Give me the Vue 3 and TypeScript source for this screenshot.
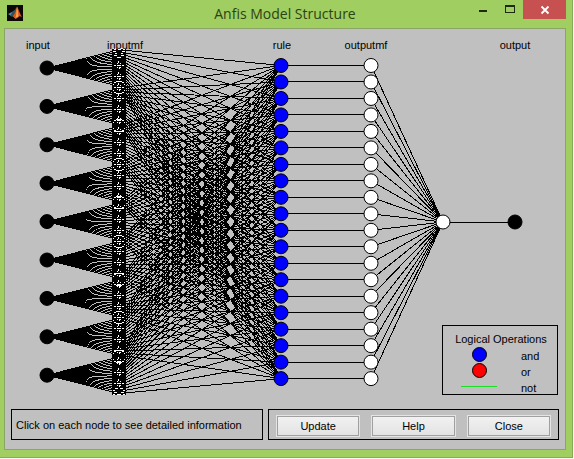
<script setup lang="ts">
import { ref } from 'vue'

interface Node {
  x: number
  y: number
  name: string
}

const INPUTS = 9
const RULES = 20
const INPUT_STEP = 38.4
const MF_STEP = INPUT_STEP / RULES
const RULE_STEP = 16.48

const column = (count: number, x: number, top: number, step: number, name: string): Node[] =>
  Array.from({ length: count }, (_, i) => ({ x, y: top + i * step, name: `${name} ${i + 1}` }))

const inputs = column(INPUTS, 42, 39, INPUT_STEP, 'Input')
const rules = column(RULES, 276, 36.5, RULE_STEP, 'Rule')
const outputMfs = column(RULES, 366, 36.5, RULE_STEP, 'Output MF')
const sum: Node = { x: 438, y: 193, name: 'Aggregated output' }
const output: Node = { x: 510, y: 193, name: 'Output' }

const MF_X = 114
const mfTop = inputs[0].y - MF_STEP * (RULES - 1) / 2
const mfY = (input: number, mf: number): number => mfTop + input * INPUT_STEP + mf * MF_STEP

const line = (x1: number, y1: number, x2: number, y2: number): string =>
  `M${x1} ${y1.toFixed(2)}L${x2} ${y2.toFixed(2)}`

const fans: string[] = []
const links: string[] = []
for (let i = 0; i < INPUTS; i++) {
  for (let j = 0; j < RULES; j++) {
    fans.push(line(inputs[i].x, inputs[i].y, MF_X, mfY(i, j)))
    links.push(line(MF_X, mfY(i, j), rules[j].x, rules[j].y))
  }
}
rules.forEach((r, j) => {
  links.push(line(r.x, r.y, outputMfs[j].x, outputMfs[j].y))
  links.push(line(outputMfs[j].x, outputMfs[j].y, sum.x, sum.y))
})
links.push(line(sum.x, sum.y, output.x, output.y))

/* Overlapping membership markers leave small crosses, with rings between two inputs. */
const crosses = Array.from({ length: 30 }, (_, i) => Math.round(36 + i * 10.97))
const rings = Array.from({ length: INPUTS - 1 }, (_, i) => Math.round(58 + i * INPUT_STEP))

const headings = [
  { x: 33, text: 'input' },
  { x: 120, text: 'inputmf' },
  { x: 277, text: 'rule' },
  { x: 361, text: 'outputmf' },
  { x: 510, text: 'output' },
]

const hint = 'Click on each node to see detailed information'
const message = ref(hint)
const show = (node: Node): void => {
  message.value = node.name
}
const reset = (): void => {
  message.value = hint
}
</script>

<template>
  <main class="window">
    <header class="titlebar">
      <svg class="logo" viewBox="0 0 16 16" aria-hidden="true">
        <rect width="16" height="16" fill="#0b0806" />
        <path d="M1 9l4-2 3-2-2 5-2 1z" fill="#4f8fa6" />
        <path d="M5 7.500l3-3 2-3-2.500 8L5 12l-1.500-1.500z" fill="#31505f" />
        <path d="M10 1.500c1 1 2.500 6.500 5 10.500-2-1-3-1-4 .5L8.500 14 5.500 11c2-1 3-5 4.500-9.500z" fill="#d9571c" />
        <path d="M10 2c1 3 1 6 1.500 9.500L8.500 13c1-3 .5-7 1.500-11z" fill="#f6a04a" />
      </svg>
      <h1 class="title">Anfis Model Structure</h1>
      <div class="controls">
        <button class="control" type="button" aria-label="Minimize">
          <svg width="10" height="10" viewBox="0 0 10 10"><rect x="1" y="6" width="8" height="2" fill="#1d2a10" /></svg>
        </button>
        <button class="control" type="button" aria-label="Maximize">
          <svg width="10" height="10" viewBox="0 0 10 10" shape-rendering="crispEdges">
            <path d="M0 1h10v8H0zM1 3v5h8V3z" fill="#1d2a10" fill-rule="evenodd" />
          </svg>
        </button>
        <button class="control close" type="button" aria-label="Close window">
          <svg width="10" height="10" viewBox="0 0 10 10"><path d="M1.500 1.500l7 7M8.500 1.500l-7 7" stroke="#fff" stroke-width="1.800" /></svg>
        </button>
      </div>
    </header>

    <section class="client">
      <div class="plot">
        <svg class="network" viewBox="0 0 560 371" role="img" aria-label="Model network">
          <g shape-rendering="crispEdges">
            <path class="edge" :d="fans.join('')" />
            <path class="edge" :d="links.join('')" />
            <rect x="107" y="20" width="14" height="346" fill="#000" />
            <g class="marks">
              <path d="M109 20h2m2 0h3m2 0h2M108 22h3m6 0h3M110 24h2m4 0h2M109 26h3m4 0h3M112 28h4M108 19h12" />
              <path d="M108 365h2m2 0h4m2 0h2M109 363h3m4 0h3M108 361h2m8 0h2M110 359h3m2 0h3" />
              <path
                v-for="y in crosses"
                :key="y"
                :d="`M109 ${y}h2m1 0h4m1 0h2M112 ${y - 2}h1m2 0h1M112 ${y + 2}h1m2 0h1M113.500 ${y - 4}v2m1 4v2`"
              />
              <path
                v-for="y in rings"
                :key="y"
                :d="`M111 ${y - 6}h6M109 ${y - 5}h2m6 0h2M108 ${y - 3}h1m10 0h1M108 ${y + 3}h1m10 0h1M109 ${y + 5}h2m6 0h2M111 ${y + 6}h6`"
              />
            </g>
          </g>
          <g class="nodes">
            <circle v-for="n in inputs" :key="n.name" class="solid" :cx="n.x" :cy="n.y" r="7" @click="show(n)" />
            <circle v-for="n in rules" :key="n.name" class="rule" :cx="n.x" :cy="n.y" r="7" @click="show(n)" />
            <circle v-for="n in outputMfs" :key="n.name" class="open" :cx="n.x" :cy="n.y" r="7" @click="show(n)" />
            <circle class="open" :cx="sum.x" :cy="sum.y" r="7" @click="show(sum)" />
            <circle class="solid" :cx="output.x" :cy="output.y" r="7" @click="show(output)" />
          </g>
          <text v-for="h in headings" :key="h.text" class="heading" :x="h.x" y="20">{{ h.text }}</text>
        </svg>

        <aside class="legend">
          <h2 class="legend-title">Logical Operations</h2>
          <ul class="legend-list">
            <li><span class="swatch"><i class="dot and"></i></span>and</li>
            <li><span class="swatch"><i class="dot or"></i></span>or</li>
            <li><span class="swatch"><i class="dash"></i></span>not</li>
          </ul>
        </aside>
      </div>

      <footer class="panels">
        <p class="panel message">{{ message }}</p>
        <div class="panel actions">
          <button class="action" type="button" @click="reset">Update</button>
          <button class="action" type="button">Help</button>
          <button class="action" type="button">Close</button>
        </div>
      </footer>
    </section>
  </main>
</template>

<style>
body {
  margin: 0;
  background: #f6faf0;
}
</style>

<style scoped>
.window {
  box-sizing: border-box;
  margin-right: 1px;
  padding: 0 6px 7px 4px;
  border: solid #88ab58;
  border-width: 0 1px 1px 0;
  background: #a0ce60;
  color: #000;
  font-family: "Liberation Sans", Arial, sans-serif;
  font-size: 11px;
}

.titlebar {
  display: grid;
  grid-template-columns: 96px 1fr 96px;
  align-items: start;
  height: 28px;
}

.logo {
  width: 16px;
  height: 16px;
  margin: 5px 0 0 3px;
}

.title {
  margin: 0;
  font: 400 14px/28px "Open Sans", "Noto Sans", sans-serif;
  color: #2c4312;
  text-align: center;
}

.controls {
  display: flex;
  justify-content: flex-end;
}

.control {
  display: flex;
  align-items: center;
  justify-content: center;
  width: 28px;
  height: 18px;
  padding: 0;
  border: 0;
  background: transparent;
}

.close {
  width: 45px;
  height: 19px;
  background: #c75050;
}

.client {
  border: 1px solid #8aa566;
  background: #c0c0c0;
}

.plot {
  position: relative;
}

.network {
  display: block;
  width: 100%;
  height: auto;
}

.edge {
  fill: none;
  stroke: #000;
  stroke-width: 1px;
}

.marks {
  fill: none;
  stroke: #fff;
  stroke-width: 1px;
}

.nodes circle {
  stroke: #000;
  stroke-width: 1px;
  cursor: pointer;
}

.solid {
  fill: #000;
}

.rule {
  fill: #00f;
}

.open {
  fill: #fff;
}

.heading {
  font-size: 11px;
  text-anchor: middle;
}

.legend {
  position: absolute;
  right: 7px;
  bottom: 5px;
  box-sizing: border-box;
  width: 116px;
  height: 70px;
  padding: 5px 0 0;
  border: 1px solid #000;
}

.legend-title {
  margin: 0;
  padding-left: 2px;
  font-size: 11px;
  font-weight: 400;
  line-height: 16px;
  text-align: center;
}

.legend-list {
  margin: 0;
  padding: 0;
  list-style: none;
}

.legend-list li {
  display: flex;
  align-items: flex-start;
  gap: 24px;
  height: 16px;
  line-height: 18px;
}

.swatch {
  display: flex;
  align-items: center;
  justify-content: center;
  width: 36px;
  height: 15px;
  margin-left: 18px;
}

.dot {
  box-sizing: border-box;
  width: 15px;
  height: 15px;
  border: 1px solid #000;
  border-radius: 50%;
}

.and {
  background: #00f;
}

.or {
  background: #f00;
}

.dash {
  width: 36px;
  border-top: 1px solid #1fdc2c;
}

.panels {
  display: grid;
  grid-template-columns: 252fr 291fr;
  gap: 5px;
  padding: 9px 6px;
}

.panel {
  box-sizing: border-box;
  height: 31px;
  margin: 0;
  border: 1px solid #000;
}

.message {
  padding-left: 4px;
  line-height: 31px;
  white-space: nowrap;
}

.actions {
  display: flex;
  align-items: center;
  gap: 11px;
  padding: 2px 7px 0;
}

.action {
  flex: 1;
  height: 22px;
  padding: 0;
  border: 1px solid #e4e4e4;
  box-shadow: inset 0 0 0 1px #a0a0a0;
  background: linear-gradient(#f2f2f2, #e2e2e2);
  color: #000;
  font: 11px "Liberation Sans", Arial, sans-serif;
}
</style>
